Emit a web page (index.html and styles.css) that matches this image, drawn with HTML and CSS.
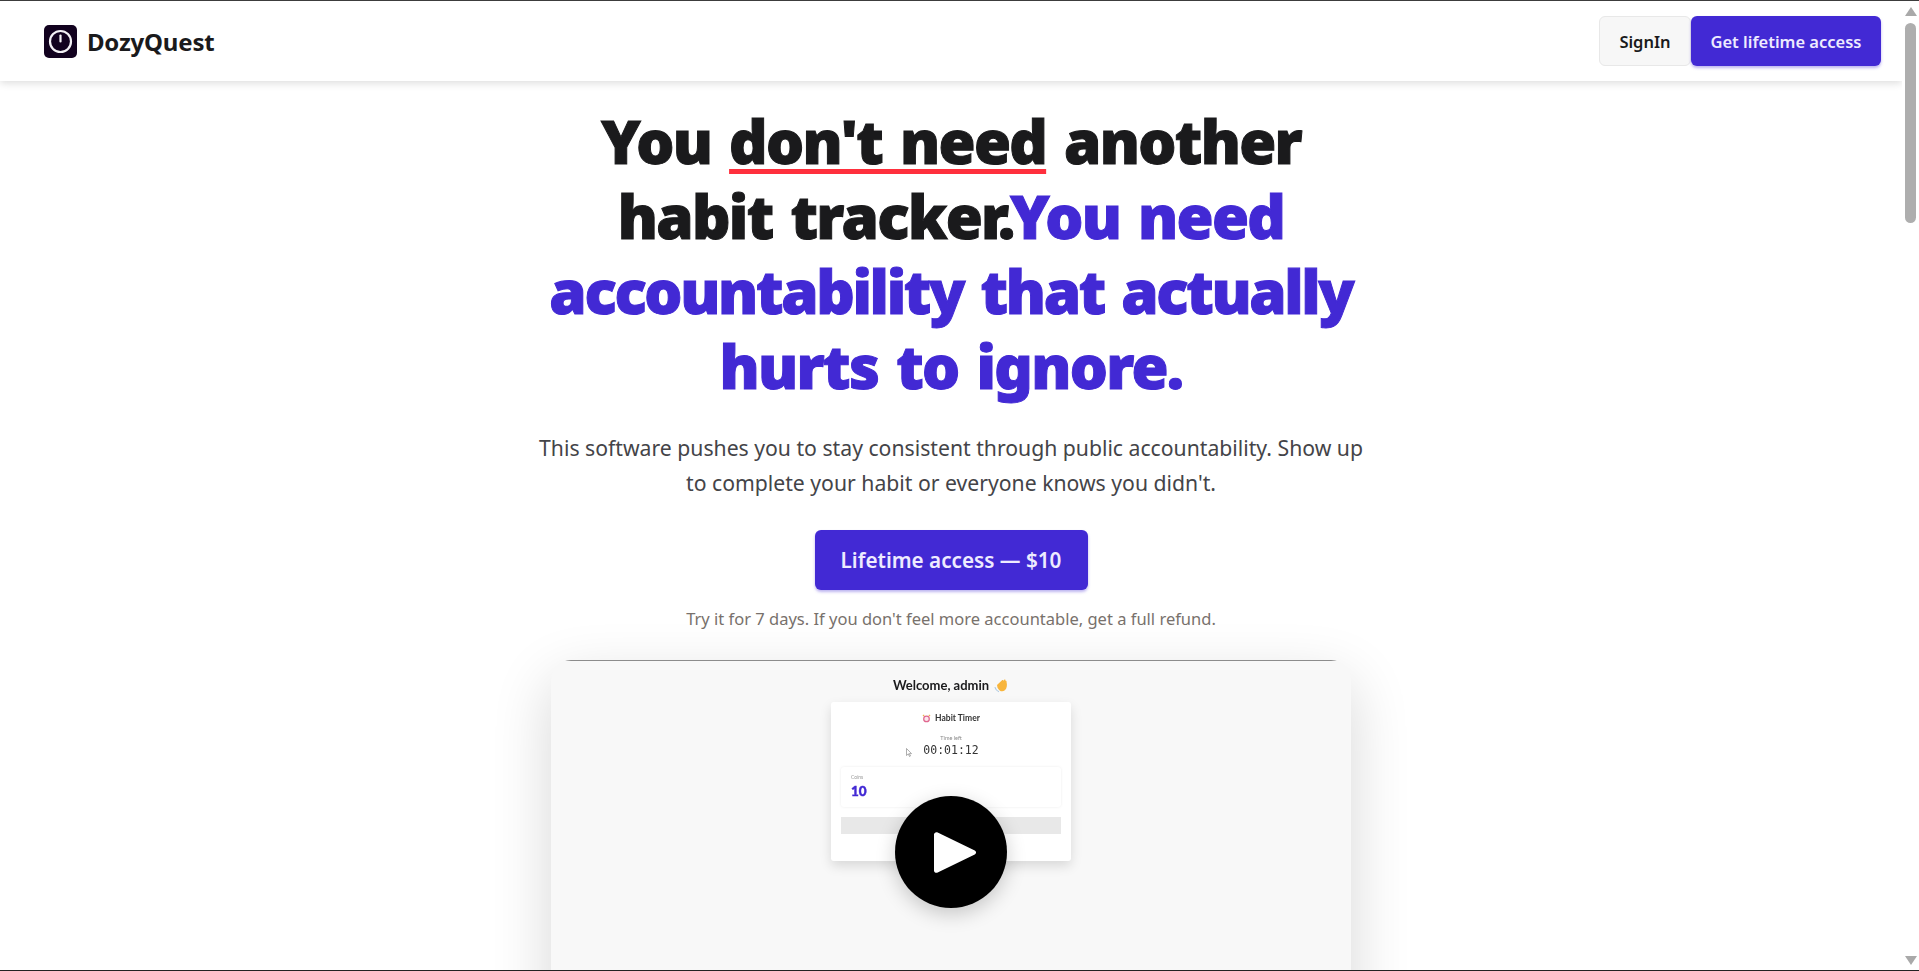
FILE: index.html
```html
<!DOCTYPE html>
<html>
<head>
  <meta charset="UTF-8">
  <meta name="viewport" content="width=device-width, initial-scale=1.0">
  <title>DozyQuest</title>
  <link rel="stylesheet" href="styles.css">
</head>
<body>
  <div class="window">
    <div class="page">
      <header class="nav">
        <a class="brand" href="#">
          <svg class="brand-icon" viewBox="0 0 33 33">
            <rect width="33" height="33" rx="5" fill="#12021f"/>
            <circle cx="16.5" cy="16.5" r="10.5" fill="none" stroke="#f4f2f6" stroke-width="2.2"/>
            <path d="M16.5 10.5v6" fill="none" stroke="#f4f2f6" stroke-width="2.2" stroke-linecap="round"/>
          </svg>
          <span>DozyQuest</span>
        </a>
        <div class="nav-actions">
          <a class="btn btn-light" href="#">SignIn</a>
          <a class="btn btn-primary" href="#">Get lifetime access</a>
        </div>
      </header>

      <main class="hero">
        <h1>You <span class="underline">don't need</span> another habit tracker.<span class="accent">You need <span class="tight">accountability that actually</span> hurts to ignore.</span></h1>
        <p class="lead">This software pushes you to stay consistent through public accountability. Show up to complete your habit or everyone knows you didn't.</p>
        <a class="btn btn-primary btn-big" href="#">Lifetime access — $10</a>
        <p class="note">Try it for 7 days. If you don't feel more accountable, get a full refund.</p>

        <div class="video">
          <div class="shot">
            <div class="welcome">
              Welcome, admin
              <svg class="emoji-hand" viewBox="0 0 14 14">
                <path d="M.8 8.500c.6 2 1.800 3.600 3.800 4.300" fill="none" stroke="#a9c6de" stroke-width="1"/>
                <path d="M2.800 6.500 7.500 2c.6-.6 1.400 0 1 .7l1-1c.7-.6 1.500.1 1.100.9.800-.3 1.400.4 1.100 1.100.8 2.700.4 6-1.600 7.800-2.200 1.800-5 1.100-6.800-2.400z" fill="#f8b53c"/>
              </svg>
            </div>
            <div class="timer-card">
              <div class="timer-title">
                <svg class="emoji-clock" viewBox="0 0 10 10">
                  <circle cx="5" cy="5.500" r="3.800" fill="#e0678f"/>
                  <circle cx="5" cy="5.500" r="2.400" fill="#fbe6ec"/>
                  <path d="M1 2.200 2.500 1M9 2.200 7.500 1" stroke="#e8b04a" stroke-width="1.200"/>
                </svg>
                Habit Timer
              </div>
              <div class="time-label">Time left</div>
              <div class="time-value">00:01:12</div>
              <div class="coins">
                <div class="coins-label">Coins</div>
                <div class="coins-value">10</div>
              </div>
              <div class="bar"></div>
            </div>
            <svg class="cursor" viewBox="0 0 6 9">
              <path d="M.5.500v7l1.800-1.600 1.200 2.600 1-.5-1.200-2.400h2.200z" fill="#fff" stroke="#777" stroke-width=".6"/>
            </svg>
          </div>
          <div class="play">
            <svg viewBox="3 1 37.600 40" preserveAspectRatio="none" class="play-icon">
              <path d="M3 3.500c0-1.800 1.800-2.900 3.300-2L39.500 19c1.500.9 1.500 3 0 3.900L6.300 40.500c-1.500.9-3.300-.2-3.300-2z" fill="#fff"/>
            </svg>
          </div>
        </div>
      </main>
    </div>

    <div class="scrollbar">
      <span class="arrow arrow-up"></span>
      <span class="track"><span class="thumb"></span></span>
      <span class="arrow arrow-down"></span>
    </div>
  </div>
</body>
</html>
```

FILE: styles.css
```css
* {padding: 0; margin: 0; box-sizing: border-box;}

html, body {
  width: 100%;
  height: 100%;
  overflow: hidden;
  background: #fff;
}
body {
  font-family: "Noto Sans", "Open Sans", "Liberation Sans", sans-serif;
  color: #1a1a1c;
}
a {
  text-decoration: none;
  color: inherit;
}

.window {
  display: flex;
  height: 100%;
  border-top: 1px solid #3c3c3c;
  border-bottom: 1px solid #222;
  overflow: hidden;
}
.page {
  flex: 1;
  min-width: 0;
  overflow: hidden;
}

/* top bar */
.nav {
  display: flex;
  align-items: center;
  justify-content: space-between;
  height: 80px;
  padding: 0 21px 0 44px;
  background: #fff;
  box-shadow: 0 2px 8px rgba(0,0,0,.14);
}
.brand {
  display: flex;
  align-items: center;
  gap: 10px;
  font-size: 24px;
  font-weight: 700;
  letter-spacing: -.2px;
}
.brand-icon {
  display: block;
  width: 33px;
  height: 33px;
}
.nav-actions {
  display: flex;
}
.btn {
  display: flex;
  align-items: center;
  justify-content: center;
  height: 50px;
  font-size: 16.500px;
  font-weight: 600;
  border-radius: 6px;
}
.btn-light {
  width: 92px;
  background: #f7f7f7;
  border: 1px solid #e8e8e8;
}
.btn-primary {
  width: 190px;
  background: #4229d4;
  color: #eeebff;
  box-shadow: 0 2px 3px rgba(66,41,212,.35);
}

/* hero */
.hero {
  display: flex;
  flex-direction: column;
  align-items: center;
  padding-top: 23px;
  text-align: center;
}
h1 {
  width: 830px;
  font-size: 60px;
  line-height: 75px;
  font-weight: 900;
  letter-spacing: -1.700px;
  word-spacing: 4px;
  -webkit-text-stroke: 1px currentColor;
  color: #1a1a1c;
}
.underline {
  text-decoration: underline;
  text-decoration-color: #ff2f3d;
  text-decoration-thickness: 5px;
  text-underline-offset: 5px;
  text-decoration-skip-ink: none;
}
.accent {
  color: #4229d4;
}
.tight {
  letter-spacing: -2.350px;
}
.lead {
  width: 840px;
  margin-top: 26px;
  font-size: 21.200px;
  line-height: 35px;
  color: #444448;
}
.btn-big {
  width: 273px;
  height: 60px;
  margin-top: 30px;
  font-size: 20.700px;
}
.note {
  margin-top: 17px;
  font-size: 16.500px;
  line-height: 24px;
  color: #78716c;
}

/* video */
.video {
  position: relative;
  width: 800px;
  height: 500px;
  margin-top: 29px;
  border-radius: 20px;
  background: #f8f8f8;
  box-shadow: 0 20px 60px rgba(0,0,0,.16);
  overflow: hidden;
}
.shot {
  position: relative;
  display: flex;
  flex-direction: column;
  align-items: center;
  height: 100%;
  border-top: 1px solid #8c8c8c;
  padding-top: 15px;
  font-family: Lato, "Noto Sans", sans-serif;
  filter: blur(.3px);
}
.welcome {
  display: flex;
  align-items: center;
  gap: 5px;
  font-size: 13px;
  line-height: 18px;
  font-weight: 700;
}
.emoji-hand {
  width: 15px;
  height: 15px;
}
.timer-card {
  display: flex;
  flex-direction: column;
  align-items: center;
  width: 240px;
  height: 159px;
  margin-top: 8px;
  padding: 10px;
  background: #fff;
  border-radius: 3px;
  box-shadow: 0 5px 12px rgba(0,0,0,.13);
}
.timer-title {
  display: flex;
  align-items: center;
  gap: 4px;
  font-size: 8.500px;
  line-height: 12px;
  font-weight: 700;
  color: #333;
}
.emoji-clock {
  width: 9px;
  height: 9px;
}
.time-label {
  margin-top: 10px;
  font-size: 5.500px;
  line-height: 8px;
  color: #888;
}
.time-value {
  margin-top: 1px;
  font-family: "DejaVu Sans Mono", "Liberation Mono", monospace;
  font-size: 11.500px;
  line-height: 14px;
  color: #333;
}
.coins {
  align-self: stretch;
  flex: none;
  height: 40px;
  margin-top: 10px;
  padding: 6px 10px;
  text-align: left;
  border-radius: 3px;
  box-shadow: 0 0 3px rgba(0,0,0,.08);
}
.coins-label {
  font-size: 5px;
  line-height: 8px;
  color: #999;
}
.coins-value {
  font-size: 13.500px;
  line-height: 14px;
  margin-top: 3px;
  font-weight: 900;
  -webkit-text-stroke: .4px currentColor;
  color: #4229d4;
}
.bar {
  align-self: stretch;
  flex: none;
  height: 17px;
  margin-top: 10px;
  background: #e8e8e8;
}
.cursor {
  position: absolute;
  left: 355px;
  top: 87px;
  width: 6px;
  height: 9px;
}
.play {
  position: absolute;
  left: 344px;
  top: 136px;
  display: flex;
  align-items: center;
  justify-content: center;
  width: 112px;
  height: 112px;
  border-radius: 50%;
  background: #000;
  box-shadow: 0 6px 20px rgba(0,0,0,.2);
}
.play-icon {
  width: 42px;
  height: 41px;
  margin-left: 8px;
}

/* scrollbar */
.scrollbar {
  display: flex;
  flex-direction: column;
  align-items: center;
  flex: none;
  width: 17px;
  padding: 6px 0 5px;
  background: #fff;
}
.arrow {
  flex: none;
  width: 0;
  height: 0;
  border-left: 6px solid transparent;
  border-right: 6px solid transparent;
}
.arrow-up {
  border-bottom: 9px solid #a9a9a9;
}
.arrow-down {
  border-top: 9px solid #a9a9a9;
}
.track {
  flex: 1;
  padding-top: 7px;
}
.thumb {
  display: block;
  width: 11px;
  height: 200px;
  border-radius: 6px;
  background: #aeaeae;
}
```
